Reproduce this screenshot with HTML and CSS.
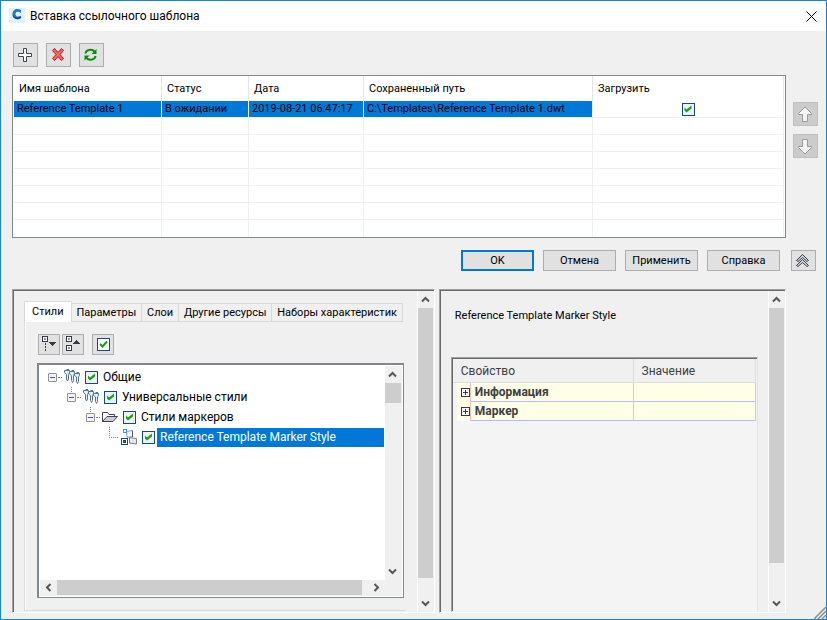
FILE: index.html
```
<!DOCTYPE html>
<html lang="ru">
<head>
  <meta charset="UTF-8" />
  <title>Вставка ссылочного шаблона</title>
  <meta name="viewport" content="width=device-width, initial-scale=1.0"/>
  <link rel="stylesheet" href="styles.css">
</head>
<body>

<!-- shared glyphs -->
<svg class="defs" aria-hidden="true">
  <symbol id="chevron" viewBox="0 0 9 7">
    <path d="M1 5.5 L4.5 2 L8 5.5" fill="none" stroke="#555" stroke-width="2"/>
  </symbol>
  <symbol id="styles" viewBox="0 0 17 16">
    <g fill="#e4eef6" stroke="#4f7698">
      <path d="M.5 3.5 V1.500 H5.500 V3.500 L4.500 5.500 V10 L3.500 12 L2.500 10 V5.500 L.5 3.500"/>
      <path d="M5.500 5 V2.500 H10.500 V5 L9.500 6.500 V11.500 L8.500 13.500 L7.500 11.500 V6.500 L5.500 5"/>
      <path d="M10.500 6.500 V4.500 H15.500 V6.500 L14.500 8 V12.500 L13.500 14.500 L12.500 12.500 V8 L10.500 6.500"/>
      <path d="M2.500 .5 H5 M7.500 1.500 H10 M12.500 3.500 H15" fill="none"/>
    </g>
  </symbol>
</svg>

<header class="titlebar">
  <svg class="logo" width="16" height="16" viewBox="0 0 16 16">
    <rect width="16" height="15" fill="#e3f0f8"/>
    <path d="M12 2 C8 -.5 3.500 1.500 3.500 6 C3.500 11 8 12.500 12 10 V7.500 C9 9.500 6.500 8.500 6.500 6 C6.500 3.500 9.500 3 12 5 Z" fill="#1f7fbd"/>
    <path d="M3.500 6 C3.500 11 8 12.500 12 10 V8.500 C8 10.500 4.500 9.500 3.500 6 Z" fill="#0b4a7e"/>
  </svg>
  <h1>Вставка ссылочного шаблона</h1>
  <button class="close" aria-label="Закрыть">
    <svg width="11" height="11" viewBox="0 0 11 11"><path d="M.5 .5 L10.500 10.500 M10.500 .5 L.5 10.500" stroke="#000" fill="none"/></svg>
  </button>
</header>

<main>
  <div class="toolbar">
    <button class="tool" aria-label="Добавить">
      <svg width="17" height="16" viewBox="0 0 17 16"><path d="M6.500 1.500 H9.500 V6.500 H14.500 V9.500 H9.500 V14.500 H6.500 V9.500 H1.500 V6.500 H6.500 Z" fill="#fff" stroke="#41444f"/></svg>
    </button>
    <button class="tool" aria-label="Удалить">
      <svg width="15" height="14" viewBox="0 0 15 14"><path d="M1.500 2.500 L3.500 .5 L7 4.500 L10.500 .5 L12.500 2.500 L9 6.500 L12.500 10.500 L10.500 12.500 L7 8.500 L3.500 12.500 L1.500 10.500 L5 6.500 Z" fill="#ff6464" stroke="#b51414"/></svg>
    </button>
    <button class="tool" aria-label="Обновить">
      <svg width="15" height="14" viewBox="0 0 15 14">
        <path d="M1.500 5.500 C2 1.500 8 .5 10.500 3.500 M11.500 8 C11 12 5 13 2.500 10" fill="none" stroke="#0a8a0a" stroke-width="2"/>
        <path d="M12.500 1 V6 H7.500 Z M.5 12.500 V7.500 H5.500 Z" fill="#0a8a0a"/>
      </svg>
    </button>
  </div>

  <div class="list-row">
    <div class="list">
      <table class="templates">
        <colgroup><col class="c-name"><col class="c-status"><col class="c-date"><col class="c-path"><col></colgroup>
        <thead>
          <tr><th>Имя шаблона</th><th>Статус</th><th>Дата</th><th>Сохраненный путь</th><th>Загрузить</th></tr>
        </thead>
        <tbody>
          <tr class="selected">
            <td>Reference Template 1</td><td>В ожидании</td><td>2019-08-21 06:47:17</td><td>C:\Templates\Reference Template 1.dwt</td>
            <td class="load"><input type="checkbox" aria-label="Загрузить" checked></td>
          </tr>
          <tr><td></td><td></td><td></td><td></td><td></td></tr>
          <tr><td></td><td></td><td></td><td></td><td></td></tr>
          <tr><td></td><td></td><td></td><td></td><td></td></tr>
          <tr><td></td><td></td><td></td><td></td><td></td></tr>
          <tr><td></td><td></td><td></td><td></td><td></td></tr>
          <tr><td></td><td></td><td></td><td></td><td></td></tr>
          <tr><td></td><td></td><td></td><td></td><td></td></tr>
        </tbody>
      </table>
    </div>
    <div class="order">
      <button class="tool" aria-label="Вверх" disabled>
        <svg width="15" height="17" viewBox="0 0 15 17"><path d="M7 1 L13.500 7.500 V8.500 H9.500 V15.500 H4.500 V8.500 H.5 V7.500 Z" fill="#f4f4f4" stroke="#999"/></svg>
      </button>
      <button class="tool" aria-label="Вниз" disabled>
        <svg width="15" height="17" viewBox="0 0 15 17"><path d="M7 16 L13.500 9.500 V8.500 H9.500 V1.500 H4.500 V8.500 H.5 V9.500 Z" fill="#f4f4f4" stroke="#999"/></svg>
      </button>
    </div>
  </div>

  <div class="actions">
    <button class="btn primary">OK</button>
    <button class="btn">Отмена</button>
    <button class="btn">Применить</button>
    <button class="btn">Справка</button>
    <button class="collapse" aria-label="Свернуть">
      <svg width="15" height="15" viewBox="0 0 15 15"><path d="M.5 7.500 L6.500 1.500 L12.500 7.500 L11 8.500 L6.500 4.500 L2 8.500 Z M.5 12.500 L6.500 6.500 L12.500 12.500 L11 13.500 L6.500 9.500 L2 13.500 Z" fill="#d4d7dd" stroke="#343a48"/></svg>
    </button>
  </div>

  <div class="panels">
    <section class="panel left">
      <div class="tabs-area">
        <div class="tabs" role="tablist">
          <button class="tab active" role="tab" aria-selected="true">Стили</button>
          <button class="tab" role="tab">Параметры</button>
          <button class="tab" role="tab">Слои</button>
          <button class="tab" role="tab">Другие ресурсы</button>
          <button class="tab" role="tab">Наборы характеристик</button>
        </div>
        <div class="page" role="tabpanel">
          <div class="tree-tools">
            <button class="mini" aria-label="Свернуть все">
              <svg width="18" height="17" viewBox="0 0 18 17" shape-rendering="crispEdges">
                <rect x="2.500" y=".5" width="5" height="5" fill="#fff" stroke="#343a48"/><rect x="4" y="2" width="2" height="2" fill="#8a8f9a"/>
                <path d="M5.500 7 V15" stroke="#343a48" stroke-dasharray="2 1"/><path d="M9 6 H16 L12.500 10 Z" fill="#343a48"/>
              </svg>
            </button>
            <button class="mini" aria-label="Развернуть все">
              <svg width="18" height="17" viewBox="0 0 18 17" shape-rendering="crispEdges">
                <rect x="2.500" y=".5" width="5" height="5" fill="#fff" stroke="#343a48"/><rect x="4" y="2" width="2" height="2" fill="#8a8f9a"/>
                <rect x="2.500" y="9.500" width="5" height="5" fill="#fff" stroke="#343a48"/><rect x="4" y="11" width="2" height="2" fill="#8a8f9a"/>
                <path d="M9 8 H16 L12.500 4 Z" fill="#343a48"/>
              </svg>
            </button>
            <button class="mini check-all" aria-label="Выбрать все">
              <svg width="13" height="13" viewBox="0 0 13 13"><rect x=".5" y=".5" width="12" height="12" fill="#fff" stroke="#124b86"/><path d="M3 6 L5.500 8.500 L10 3.500" fill="none" stroke="#16a016" stroke-width="2"/></svg>
            </button>
          </div>
          <div class="tree-box">
            <div class="tree-main">
              <ul class="tree">
                <li>
                  <div class="node">
                    <span class="toggle"></span>
                    <svg class="icon" width="17" height="16"><use href="#styles"/></svg>
                    <label><input type="checkbox" checked><span>Общие</span></label>
                  </div>
                  <ul>
                    <li>
                      <div class="node child">
                        <span class="toggle"></span>
                        <svg class="icon" width="17" height="16"><use href="#styles"/></svg>
                        <label><input type="checkbox" checked><span>Универсальные стили</span></label>
                      </div>
                      <ul>
                        <li>
                          <div class="node child">
                            <span class="toggle"></span>
                            <svg class="icon" width="17" height="16" viewBox="0 0 17 16">
                              <path d="M.5 12.500 V3.500 H5.500 L7 5.500 H12.500 V7" fill="#fff" stroke="#41444f"/>
                              <path d="M.5 12.500 L5 7.500 H15.500 L11 12.500 Z" fill="#c9ccd2" stroke="#41444f"/>
                            </svg>
                            <label><input type="checkbox" checked><span>Стили маркеров</span></label>
                          </div>
                          <ul>
                            <li>
                              <div class="node leaf">
                                <span class="branch"></span>
                                <svg class="icon" width="17" height="16" viewBox="0 0 17 16">
                                  <path d="M5.500 2.500 L11.500 1.500 V7.500 L6 8.500 Z" fill="#f4f4f4" stroke="#999ea6"/>
                                  <path d="M11.500 1.500 V8" fill="none" stroke="#555a64"/>
                                  <path d="M8.500 8.500 L15.500 9.500 V15 L8.500 14 Z" fill="#e8e8e8" stroke="#777c86"/>
                                  <rect x="2.500" y=".5" width="3" height="3" fill="#fff" stroke="#3399ee"/>
                                  <rect x=".5" y="9.500" width="6" height="6" fill="#fff" stroke="#124b86"/>
                                  <rect x="2" y="11" width="3" height="3" fill="#124b86"/>
                                </svg>
                                <label class="current"><input type="checkbox" checked><span>Reference Template Marker Style</span></label>
                              </div>
                            </li>
                          </ul>
                        </li>
                      </ul>
                    </li>
                  </ul>
                </li>
              </ul>
              <div class="scroll vertical">
                <button aria-label="Вверх"><svg width="9" height="7"><use href="#chevron"/></svg></button>
                <div class="track"><div class="thumb short"></div></div>
                <button aria-label="Вниз"><svg class="down" width="9" height="7"><use href="#chevron"/></svg></button>
              </div>
            </div>
            <div class="scroll horizontal">
              <button aria-label="Влево"><svg class="to-left" width="9" height="7"><use href="#chevron"/></svg></button>
              <div class="track"><div class="thumb wide"></div></div>
              <button aria-label="Вправо"><svg class="to-right" width="9" height="7"><use href="#chevron"/></svg></button>
            </div>
          </div>
        </div>
      </div>
      <div class="scroll vertical outer">
        <button aria-label="Вверх"><svg width="9" height="7"><use href="#chevron"/></svg></button>
        <div class="track"><div class="thumb tall"></div></div>
        <button aria-label="Вниз"><svg class="down" width="9" height="7"><use href="#chevron"/></svg></button>
      </div>
    </section>

    <section class="panel right">
      <div class="details">
        <p>Reference Template Marker Style</p>
        <div class="props-box">
          <table class="props">
            <colgroup><col class="c-expand"><col class="c-prop"><col></colgroup>
            <thead><tr><th colspan="2">Свойство</th><th>Значение</th></tr></thead>
            <tbody>
              <tr><td class="expand"><button aria-label="Развернуть"></button></td><td class="name">Информация</td><td class="value"></td></tr>
              <tr><td class="expand"><button aria-label="Развернуть"></button></td><td class="name">Маркер</td><td class="value"></td></tr>
            </tbody>
          </table>
        </div>
      </div>
      <div class="scroll vertical outer">
        <button aria-label="Вверх"><svg width="9" height="7"><use href="#chevron"/></svg></button>
        <div class="track"><div class="thumb medium"></div></div>
        <button aria-label="Вниз"><svg class="down" width="9" height="7"><use href="#chevron"/></svg></button>
      </div>
    </section>
  </div>
</main>

<svg class="grip" width="12" height="12" viewBox="0 0 12 12"><path d="M0 12 L12 0 M4 12 L12 4 M8 12 L12 8" stroke="#8c8c8c" stroke-width="1.500"/></svg>

</body>
</html>
```

FILE: styles.css
```
* {
  box-sizing: border-box;
}
body {
  margin: 0;
  min-height: 100vh;
  display: flex;
  flex-direction: column;
  position: relative;
  border: 1px solid #1883d7;
  background: #f0f0f0;
  color: #000;
  font-family: Roboto, "Noto Sans", sans-serif;
  font-size: 11px;
  line-height: 16px;
}
button {
  display: flex;
  align-items: center;
  justify-content: center;
  margin: 0;
  padding: 0;
  border: 1px solid #adadad;
  background: #e1e1e1;
  color: #000;
  font: inherit;
}
svg {
  display: block;
  flex: none;
}
ul {
  list-style: none;
  margin: 0;
  padding: 0;
}
.defs {
  position: absolute;
  width: 0;
  height: 0;
}

input[type="checkbox"] {
  appearance: none;
  flex: none;
  display: block;
  width: 13px;
  height: 13px;
  margin: 0;
  border: 1px solid #124b86;
  background: #f1f1f6;
}
input[type="checkbox"]:checked::before {
  content: "";
  display: block;
  width: 11px;
  height: 11px;
  background: #16a016;
  clip-path: polygon(2px 4px, 4px 6px, 9px 2px, 9px 5px, 4px 9px, 2px 7px);
}

/* title bar */
.titlebar {
  display: flex;
  align-items: center;
  height: 30px;
  padding: 0 9px 0 8px;
  background: #fff;
}
.titlebar h1 {
  flex: 1;
  margin: 0 0 0 5px;
  font-size: 12px;
  font-weight: normal;
}
.close {
  border: 0;
  background: none;
}

main {
  flex: 1;
  display: flex;
  flex-direction: column;
  padding: 12px 8px 6px 11px;
}
.toolbar {
  display: flex;
  gap: 8px;
  padding-left: 1px;
}
.tool {
  width: 25px;
  height: 24px;
}
.tool:disabled {
  background: #ccc;
  border-color: #bfbfbf;
}

/* template list */
.list-row {
  display: flex;
  gap: 7px;
  margin-top: 8px;
}
.list {
  flex: 1;
  padding: 0 1px;
  border: 1px solid #828790;
  background: #fff;
}
.order {
  display: flex;
  flex-direction: column;
  gap: 8px;
  padding-top: 27px;
}
.templates {
  width: 100%;
  table-layout: fixed;
  border-collapse: separate;
  border-spacing: 0;
}
.c-name { width: 148px; }
.c-status { width: 87px; }
.c-date { width: 115px; }
.c-path { width: 229px; }
.templates th {
  height: 25px;
  padding: 0 0 0 5px;
  border-right: 1px solid #e5e5e5;
  font-weight: normal;
  text-align: left;
}
.templates td {
  height: 17px;
  padding: 0 0 0 3px;
  border-right: 1px solid #f0f0f0;
  border-bottom: 1px solid #f0f0f0;
  white-space: nowrap;
}
.templates tr:last-child td {
  border-bottom: 0;
}
.selected td {
  background: #0078d7;
  background-clip: padding-box;
}
.selected td.load {
  background: none;
  padding: 0;
}
.load input {
  margin: 0 auto;
}

/* dialog buttons */
.actions {
  display: flex;
  justify-content: flex-end;
  gap: 9px;
  padding: 12px 2px 0 0;
}
.btn {
  width: 73px;
  height: 21px;
}
.primary {
  border: 2px solid #0078d7;
}
.collapse {
  width: 25px;
  height: 21px;
  margin-left: 2px;
}

/* lower panels */
.panels {
  flex: 1;
  display: flex;
  gap: 4px;
  margin: 18px 32px 0 0;
}
.panel {
  display: flex;
  min-width: 0;
  border: 1px solid;
  border-color: #a0a0a0 #fff #fff #a0a0a0;
  box-shadow: inset 1px 1px #696969;
}
.left { flex: 423; }
.right { flex: 347; }

.scroll {
  display: flex;
  background: #f0f0f0;
}
.scroll button {
  flex: none;
  width: 15px;
  height: 17px;
  border: 0;
  background: none;
}
.vertical {
  flex-direction: column;
  width: 17px;
}
.outer {
  margin-top: 1px;
  border-left: 1px solid #fff;
}
.track {
  flex: 1;
}
.thumb {
  background: #cdcdcd;
}
.vertical .thumb { margin-right: 1px; }
.short { height: 20px; }
.tall { height: 94%; }
.medium { height: 89%; }
.down { transform: rotate(180deg); }
.to-left { transform: rotate(-90deg); }
.to-right { transform: rotate(90deg); }

.tabs-area {
  flex: 1;
  min-width: 0;
  display: flex;
  flex-direction: column;
  padding: 11px 12px 1px 11px;
}
.tabs {
  display: flex;
  align-items: flex-end;
  padding-right: 2px;
}
.tab {
  flex: 1 0 auto;
  height: 19px;
  padding: 0 4px;
  border-color: #d9d9d9;
  border-left: 0;
  background: #f0f0f0;
  white-space: nowrap;
}
.tab.active {
  flex: none;
  height: 21px;
  padding: 0 7px;
  border: 1px solid #d9d9d9;
  border-bottom: 0;
  background: #fff;
}
.page {
  flex: 1;
  display: flex;
  flex-direction: column;
  padding: 12px 1px 12px 12px;
  border-left: 1px solid #dcdcdc;
  border-bottom: 1px solid #dcdcdc;
  box-shadow: inset 1px 0 #fff;
}
.tree-tools {
  display: flex;
  gap: 2px;
  padding-left: 1px;
}
.mini {
  width: 22px;
  height: 21px;
}
.check-all {
  margin-left: 6px;
}

.tree-box {
  flex: 1;
  display: flex;
  flex-direction: column;
  margin-top: 8px;
  padding: 1px;
  border: 1px solid #828790;
  border-width: 2px 1px 1px 2px;
  background: #fff;
}
.tree-main {
  flex: 1;
  display: flex;
}
.tree {
  flex: 1;
  padding: 1px 1px 0 8px;
  font-size: 12px;
}
.tree ul {
  padding-left: 19px;
}
.node {
  position: relative;
  display: flex;
  align-items: center;
  height: 20px;
}
.toggle {
  position: relative;
  width: 9px;
  height: 9px;
  margin-right: 7px;
  border: 1px solid #919191;
  border-radius: 1px;
  background: linear-gradient(#3c5ca0, #3c5ca0) center / 5px 1px no-repeat #f4f4f4;
}
.toggle::after {
  content: "";
  position: absolute;
  left: 9px;
  top: 3px;
  width: 4px;
  border-top: 1px dotted #808080;
}
.child::before {
  content: "";
  position: absolute;
  left: 4px;
  top: 0;
  height: 5px;
  border-left: 1px dotted #808080;
}
.branch {
  align-self: flex-start;
  width: 9px;
  height: 11px;
  margin: 0 3px 0 4px;
  border: 1px dotted #808080;
  border-width: 0 0 1px 1px;
}
.icon {
  margin-right: 4px;
}
.node label {
  flex: 1;
  display: flex;
  align-items: center;
}
.node label span {
  padding: 0 5px;
  white-space: nowrap;
}
.node .current span {
  flex: 1;
  height: 19px;
  margin-left: 2px;
  padding: 0 3px;
  line-height: 19px;
  background: #0078d7;
  color: #fff;
}
.horizontal {
  height: 16px;
  padding-right: 17px;
}
.horizontal .thumb {
  height: 15px;
}
.horizontal button {
  width: 17px;
  height: 15px;
}
.wide { width: 98%; }

/* properties */
.details {
  flex: 1;
  min-width: 0;
  display: flex;
  flex-direction: column;
  padding: 18px 10px 0 11px;
}
.details p {
  margin: 0;
  padding-left: 4px;
}
.props-box {
  flex: 1;
  margin-top: 33px;
  padding: 1px 1px 0 1px;
  border: 1px solid;
  border-color: #a0a0a0 #e3e3e3 #f0f0f0 #a0a0a0;
  box-shadow: inset 1px 1px #696969;
  background: #f4f4f4;
}
.props {
  width: 100%;
  table-layout: fixed;
  border-collapse: separate;
  border-spacing: 0;
  color: #404040;
  font-size: 12px;
}
.c-expand { width: 17px; }
.c-prop { width: 54%; }
.props th {
  height: 24px;
  padding: 0 8px;
  border-right: 1px solid #dcdcdc;
  border-bottom: 1px solid #dcdcdc;
  background: #f0f0f0;
  font-weight: normal;
  text-align: left;
}
.props td {
  height: 19px;
  padding: 0;
  background: #ffffe8;
}
.props .name,
.props .value {
  border-right: 1px solid #ffb9b9;
  border-bottom: 1px solid #b9b9ff;
}
.props .name {
  padding-left: 4px;
  border-left: 1px solid #ffb9b9;
  font-weight: bold;
}
.props .expand {
  border-left: 4px solid #f4f4f4;
}
.expand button {
  width: 9px;
  height: 9px;
  margin-left: 4px;
  border-color: #343a48;
  background:
    linear-gradient(#343a48, #343a48) center / 5px 1px no-repeat,
    linear-gradient(#343a48, #343a48) center / 1px 5px no-repeat,
    #fff;
}

.grip {
  position: absolute;
  right: 0;
  bottom: 0;
}
```
